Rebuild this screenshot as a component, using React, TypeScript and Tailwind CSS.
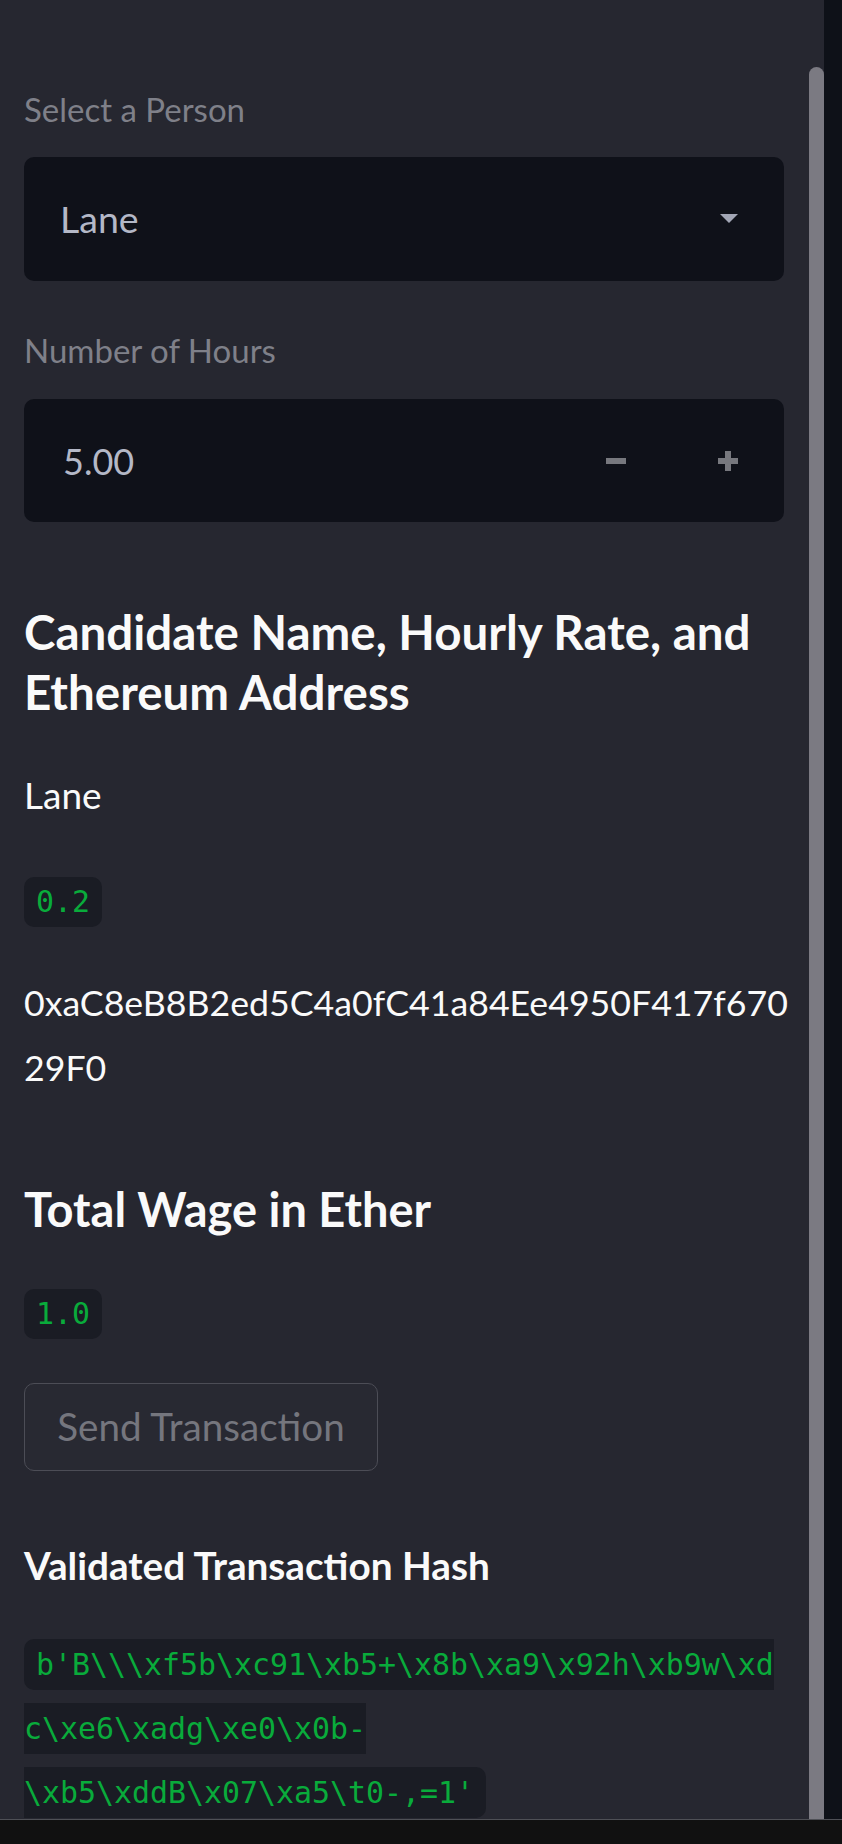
import React from "react";

function Triangle() {
  return (
    <svg width="18" height="10" viewBox="0 0 18 10" className="block">
      <polygon points="0,0 18,0 9,9" fill="#a2a6b5" />
    </svg>
  );
}

function CodeChip({ children }: { children: React.ReactNode }) {
  return (
    <div className="inline-flex h-[50px] items-center rounded-[10px] bg-[#1a1c24] px-[12px] font-['DejaVu_Sans_Mono',monospace] text-[29.9px] text-[#09ab3b]">
      {children}
    </div>
  );
}

export default function App() {
  return (
    <div className="flex h-[1844px] w-[842px] flex-col overflow-hidden bg-[#111111] font-['Lato',sans-serif]">
      <div className="flex h-[1819px] w-full">
        <div className="relative h-full w-[824px] overflow-hidden bg-[#262730]">
          <div className="flex w-[760px] flex-col items-start pl-[24px] pt-[89px]">
            <div className="h-[40px] text-[33px] leading-[40px] text-[#7f8089]">Select a Person</div>

            <div className="mt-[28px] flex h-[124px] w-[760px] items-center justify-between rounded-[10px] bg-[#0f1119] pl-[36px] pr-[46px]">
              <span className="text-[37.5px] text-[#b4b8c7]">Lane</span>
              <Triangle />
            </div>

            <div className="mt-[49px] h-[40px] text-[33px] leading-[40px] text-[#7f8089]">Number of Hours</div>

            <div className="mt-[29px] flex h-[123px] w-[760px] items-center rounded-[10px] bg-[#0f1119]">
              <div className="flex-1 pl-[39px] text-[36px] text-[#b4b8c7]">5.00</div>
              <div className="flex h-full w-[112px] items-center justify-center">
                <div className="h-[6px] w-[20px] bg-[#77787e]" />
              </div>
              <div className="flex h-full w-[112px] items-center justify-center">
                <div className="relative h-[20px] w-[20px]">
                  <div className="absolute left-0 top-[7px] h-[6px] w-[20px] bg-[#77787e]" />
                  <div className="absolute left-[7px] top-0 h-[20px] w-[6px] bg-[#77787e]" />
                </div>
              </div>
            </div>

            <div className="mt-[80px] text-[47.5px] font-bold leading-[60px] text-[#fafafa]">
              Candidate Name, Hourly Rate, and
              <br />
              Ethereum Address
            </div>

            <div className="mt-[43px] h-[60px] text-[37px] leading-[60px] text-[#fafafa]">Lane</div>

            <div className="mt-[52px]">
              <CodeChip>0.2</CodeChip>
            </div>

            <div className="mt-[43px] text-[35.7px] leading-[65px] text-[#fafafa]">
              0xaC8eB8B2ed5C4a0fC41a84Ee4950F417f670
              <br />
              29F0
            </div>

            <div className="mt-[79px] h-[60px] text-[47px] font-bold leading-[60px] text-[#fafafa]">Total Wage in Ether</div>

            <div className="mt-[50px]">
              <CodeChip>1.0</CodeChip>
            </div>

            <div className="mt-[44px] flex h-[88px] w-[354px] items-center justify-center rounded-[10px] border-[1.5px] border-[#4c4d56] bg-[#282932] text-[38.6px] text-[#75767e]">
              Send Transaction
            </div>

            <div className="mt-[69px] h-[50px] text-[38.7px] font-bold leading-[50px] text-[#fafafa]">Validated Transaction Hash</div>

            <div className="mt-[43px] font-['DejaVu_Sans_Mono',monospace] text-[29.9px] leading-[64px] text-[#09ab3b]">
              <code className="rounded-[10px] bg-[#1a1c24] px-[12px] py-[7.6px] font-['DejaVu_Sans_Mono',monospace]">
                {"b'B\\\\\\xf5b\\xc91\\xb5+\\x8b\\xa9\\x92h\\xb9w\\xd"}
                <br />
                {"c\\xe6\\xadg\\xe0\\x0b-"}
                <br />
                {"\\xb5\\xddB\\x07\\xa5\\t0-,=1'"}
              </code>
            </div>
          </div>

          <div className="absolute right-0 top-[67px] h-[1760px] w-[15px] rounded-full bg-[#7b7a82]" />
        </div>
        <div className="h-full w-[18px] bg-[#0e1118]" />
      </div>
      <div className="h-[1px] w-full bg-[#4f5056]" />
      <div className="flex-1 bg-[#111111]" />
    </div>
  );
}
